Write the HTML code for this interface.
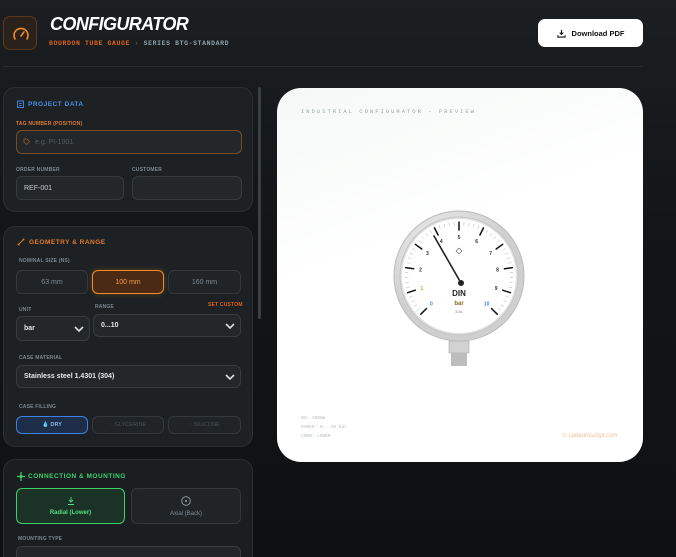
<!DOCTYPE html>
<html><head><meta charset="utf-8"><style>
*{box-sizing:border-box;margin:0;padding:0}
html{width:676px;height:557px;overflow:hidden}
body{width:676px;height:557px;overflow:hidden;background:linear-gradient(180deg,#1b1f21 0%,#131517 40%,#0f1012 100%);font-family:"Liberation Sans",sans-serif;position:relative;color:#ccc}
.abs{position:absolute}
.card{position:absolute;left:3px;width:250px;background:#1d2124;border:1px solid #2a2f33;border-radius:12px}
.lbl{position:absolute;font-size:5px;color:#7d8890;font-weight:bold;letter-spacing:.2px}
.inp{position:absolute;background:#232729;border:1px solid #363b3f;border-radius:6px;font-size:7px;color:#c9ced2;padding-left:7px;display:flex;align-items:center}
.hd{position:absolute;font-size:6.5px;font-weight:bold;letter-spacing:.5px}
.btn{position:absolute;background:#202427;border:1px solid #33383c;border-radius:6px;font-size:7px;color:#7f8a93;display:flex;align-items:center;justify-content:center}
.chev{position:absolute;right:5px;top:50%;margin-top:-3px;width:10px;height:6px}
.mono{font-family:"Liberation Mono",monospace}
</style></head><body>
<div class="abs" style="left:3px;top:16px;width:34px;height:34px;border:1px solid #5a3a1e;background:#2a211a;border-radius:7px">
<svg width="34" height="34" viewBox="0 0 34 34"><path d="M11 22a7 7 0 1 1 12 0" fill="none" stroke="#f08a24" stroke-width="1.6" stroke-linecap="round"/><path d="M17 19l3-4" stroke="#f08a24" stroke-width="1.6" stroke-linecap="round"/></svg></div>
<div class="abs" style="left:50px;top:14px;font-size:18px;font-weight:bold;font-style:italic;color:#fff;letter-spacing:-.6px">CONFIGURATOR</div>
<div class="abs mono" style="left:49px;top:40px;font-size:6.5px;font-weight:bold;letter-spacing:.6px"><span style="color:#e0621a">BOURDON TUBE GAUGE</span> <span style="color:#555">›</span> <span style="color:#8fa0ab">SERIES BTG-STANDARD</span></div>
<div class="abs" style="left:538px;top:19px;width:105px;height:28px;background:#fff;border-radius:7px;font-size:7.5px;font-weight:bold;color:#111;display:flex;align-items:center;justify-content:center;gap:6px">
<svg width="9" height="9" viewBox="0 0 10 10"><path d="M5 1v5M3 4l2 2 2-2M1 7v2h8V7" fill="none" stroke="#111" stroke-width="1.2"/></svg>Download PDF</div>
<div class="abs" style="left:3px;top:66px;width:640px;height:1px;background:#262a2d"></div>
<div class="abs" style="left:258px;top:87px;width:3px;height:232px;background:#3a3f43;border-radius:2px"></div>

<div class="card" style="top:87px;height:125px">
<svg class="abs" style="left:13px;top:12px" width="7" height="8" viewBox="0 0 7 8"><rect x=".5" y="1" width="6" height="6.5" fill="none" stroke="#4a8ee8" stroke-width=".9"/><path d="M2 3.5h3M2 5.5h3" stroke="#4a8ee8" stroke-width=".8"/></svg>
<div class="hd" style="left:24px;top:13px;color:#4a8ee8">PROJECT DATA</div>
<div class="lbl" style="left:12px;top:33px;color:#e07a30">TAG NUMBER (POSITION)</div>
<div class="inp" style="left:12px;top:42px;width:226px;height:24px;border-color:#7a4a22;color:#555e66;padding-left:18px">e.g. PI-1001</div>
<svg class="abs" style="left:19px;top:50px" width="7" height="7" viewBox="0 0 7 7"><path d="M1 1h3l2.5 2.5-3 3L1 4z" fill="none" stroke="#8a5a30" stroke-width=".8"/></svg>
<div class="lbl" style="left:12px;top:79px">ORDER NUMBER</div>
<div class="inp" style="left:12px;top:88px;width:108px;height:24px">REF-001</div>
<div class="lbl" style="left:128px;top:79px">CUSTOMER</div>
<div class="inp" style="left:128px;top:88px;width:110px;height:24px"></div>
</div>

<div class="card" style="top:226px;height:221px">
<svg class="abs" style="left:13px;top:11px" width="8" height="8" viewBox="0 0 8 8"><path d="M1 7l6-6" stroke="#e07a30" stroke-width=".9"/><circle cx="1.5" cy="6.5" r="1" fill="#e07a30"/><circle cx="6.5" cy="1.5" r="1" fill="#e07a30"/></svg>
<div class="hd" style="left:25px;top:12px;color:#e07a30">GEOMETRY &amp; RANGE</div>
<div class="lbl" style="left:15px;top:31px">NOMINAL SIZE (NS)</div>
<div class="btn" style="left:12px;top:43px;width:72px;height:24px">63 mm</div>
<div class="btn" style="left:88px;top:43px;width:72px;height:24px;background:#4a2a15;border-color:#f08a24;color:#f59a4a;box-shadow:0 0 6px rgba(240,138,36,.3)">100 mm</div>
<div class="btn" style="left:164px;top:43px;width:73px;height:24px">160 mm</div>
<div class="lbl" style="left:15px;top:80px">UNIT</div>
<div class="lbl" style="left:91px;top:77px">RANGE</div>
<div class="lbl" style="left:204px;top:75px;color:#e0621a">SET CUSTOM</div>
<div class="inp" style="left:12px;top:89px;width:74px;height:25px;font-weight:bold;color:#e5e8ea">bar<svg class="chev" viewBox="0 0 10 6"><path d="M1 1l4 4 4-4" fill="none" stroke="#ddd" stroke-width="1.6"/></svg></div>
<div class="inp" style="left:89px;top:87px;width:148px;height:23px;font-weight:bold;color:#e5e8ea">0...10<svg class="chev" viewBox="0 0 10 6"><path d="M1 1l4 4 4-4" fill="none" stroke="#ddd" stroke-width="1.6"/></svg></div>
<div class="lbl" style="left:15px;top:128px">CASE MATERIAL</div>
<div class="inp" style="left:12px;top:138px;width:225px;height:23px;font-weight:bold;color:#e5e8ea">Stainless steel 1.4301 (304)<svg class="chev" viewBox="0 0 10 6"><path d="M1 1l4 4 4-4" fill="none" stroke="#ddd" stroke-width="1.6"/></svg></div>
<div class="lbl" style="left:15px;top:177px">CASE FILLING</div>
<div class="btn" style="left:12px;top:189px;width:72px;height:18px;background:#1e2d48;border-color:#3b82e8;color:#8ab4f0;font-size:5.5px;font-weight:bold">💧 DRY</div>
<div class="btn" style="left:88px;top:189px;width:72px;height:18px;font-size:5.5px;color:#4a5258">◌ GLYCERINE</div>
<div class="btn" style="left:164px;top:189px;width:73px;height:18px;font-size:5.5px;color:#4a5258">◌ SILICONE</div>
</div>

<div class="card" style="top:459px;height:110px;background:#1b1e21">
<svg class="abs" style="left:13px;top:12px" width="8" height="9" viewBox="0 0 8 9"><path d="M4 0v9M0 4.5h8" stroke="#3ecf6a" stroke-width="1.2"/><circle cx="4" cy="4.5" r="1.5" fill="#3ecf6a"/></svg>
<div class="hd" style="left:24px;top:13px;color:#3ecf6a">CONNECTION &amp; MOUNTING</div>
<div class="btn" style="left:12px;top:28px;width:109px;height:36px;background:#1a3326;border-color:#3ecf6a;color:#55dd80;flex-direction:column;gap:5px;font-size:6px;font-weight:bold">
<svg width="8" height="8" viewBox="0 0 8 8"><path d="M4 0v5M2 3l2 2 2-2M1 7.5h6" fill="none" stroke="#55dd80" stroke-width=".9"/></svg>Radial (Lower)</div>
<div class="btn" style="left:127px;top:28px;width:110px;height:36px;flex-direction:column;gap:5px;font-size:6px">
<svg width="10" height="10" viewBox="0 0 10 10"><circle cx="5" cy="5" r="4.3" fill="none" stroke="#9aa3aa" stroke-width=".9"/><circle cx="5" cy="5" r="1" fill="#9aa3aa"/></svg>Axial (Back)</div>
<div class="lbl" style="left:14px;top:76px">MOUNTING TYPE</div>
<div class="inp" style="left:12px;top:86px;width:225px;height:24px"></div>
</div>

<div class="abs" style="left:277px;top:88px;width:366px;height:374px;background:linear-gradient(160deg,#f4f8f6,#fff 40%);border-radius:24px">
<div class="abs mono" style="left:24px;top:20px;font-size:5.5px;color:#9aa4aa;letter-spacing:2px">INDUSTRIAL CONFIGURATOR - PREVIEW</div>
<div class="abs mono" style="left:24px;top:326px;font-size:4.5px;color:#b5bcc0;line-height:9px">NS: 100mm<br>RANGE: 0...10 bar<br>CONN: LOWER</div>
<div class="abs" style="left:285px;top:344px;font-size:6px;color:#f7bf94">⊙ cadautoscript.com</div>
<svg class="abs" style="left:110px;top:117px" width="145" height="170" viewBox="0 0 145 170">
<defs><radialGradient id="rg" cx=".4" cy=".35"><stop offset="0" stop-color="#fafafa"/><stop offset="1" stop-color="#cfcfcf"/></radialGradient></defs>
<rect x="62" y="136" width="20" height="12" fill="#d2d2d2" stroke="#aaa" stroke-width=".6"/>
<rect x="64" y="148" width="16" height="13" fill="#bdbdbd"/>
<circle cx="72" cy="71" r="65" fill="url(#rg)" stroke="#bbb" stroke-width="1"/>
<circle cx="72" cy="71" r="59" fill="#e0e0e0" stroke="#c4c4c4"/>
<circle cx="72" cy="71" r="57" fill="#fff"/>
<g id="ticks" stroke-linecap="round"></g>
<g id="nums" font-family="Liberation Sans" font-size="5" font-weight="bold" text-anchor="middle"></g>
<text x="72" y="91" font-size="8" font-weight="bold" text-anchor="middle" fill="#222" font-family="Liberation Sans">DIN</text>
<text x="72" y="100" font-size="6" font-weight="bold" text-anchor="middle" fill="#8a6a20" font-family="Liberation Sans">bar</text>
<text x="72" y="108" font-size="3.5" text-anchor="middle" fill="#888" font-family="Liberation Sans">316L</text>
<path d="M72 43l3 3-3 3-3-3z" fill="none" stroke="#555" stroke-width=".6"/>
<line x1="74" y1="78" x2="47" y2="31" stroke="#222" stroke-width="1.6" stroke-linecap="round"/>
<circle cx="74" cy="78" r="3" fill="#222"/>
</svg>
</div>
<script>
var g=document.getElementById('ticks'),s='',n='';
for(var i=0;i<=50;i++){var a=(-135+i*5.4)*Math.PI/180,maj=i%5==0,r1=maj?46:51,r2=54;
s+='<line x1="'+(72+r1*Math.sin(a)).toFixed(1)+'" y1="'+(71-r1*Math.cos(a)).toFixed(1)+'" x2="'+(72+r2*Math.sin(a)).toFixed(1)+'" y2="'+(71-r2*Math.cos(a)).toFixed(1)+'" stroke="'+(maj?'#111':'#999')+'" stroke-width="'+(maj?1.5:.4)+'"/>';
if(maj){var k=i/5,c=(k==0||k==10)?'#3b82e8':(k==1?'#f08a24':'#333');n+='<text x="'+(72+39*Math.sin(a)).toFixed(1)+'" y="'+(72.8-39*Math.cos(a)).toFixed(1)+'" fill="'+c+'">'+k+'</text>';}}
g.innerHTML=s;document.getElementById('nums').innerHTML=n;
</script>
</body></html>
